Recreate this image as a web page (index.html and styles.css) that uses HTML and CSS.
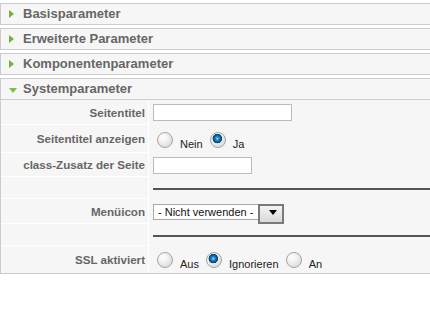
FILE: index.html
```html
<!DOCTYPE html>
<html lang="de">
<head>
  <meta charset="UTF-8" />
  <title>Parameter</title>
  <link rel="stylesheet" href="styles.css">
</head>
<body>

<div class="pane">
  <div class="panel">
    <h3 class="toggler closed"><span>Basisparameter</span></h3>
  </div>
  <div class="panel">
    <h3 class="toggler closed"><span>Erweiterte Parameter</span></h3>
  </div>
  <div class="panel">
    <h3 class="toggler closed"><span>Komponentenparameter</span></h3>
  </div>
  <div class="panel">
    <h3 class="toggler open"><span>Systemparameter</span></h3>
    <table class="paramlist">
      <tr class="r1">
        <td class="key">Seitentitel</td>
        <td class="value"><input type="text" class="text wide"></td>
      </tr>
      <tr class="r2">
        <td class="key">Seitentitel anzeigen</td>
        <td class="value radios">
          <input type="radio" name="show_title" id="st0"><label for="st0">Nein</label>
          <input type="radio" name="show_title" id="st1" checked><label for="st1">Ja</label>
        </td>
      </tr>
      <tr class="r3">
        <td class="key">class-Zusatz der Seite</td>
        <td class="value"><input type="text" class="text short"></td>
      </tr>
      <tr class="r4">
        <td class="key"></td>
        <td class="value"><hr></td>
      </tr>
      <tr class="r5">
        <td class="key">Menüicon</td>
        <td class="value">
          <span class="select">
            <select>
              <option>- Nicht verwenden -</option>
            </select>
          </span>
        </td>
      </tr>
      <tr class="r6">
        <td class="key"></td>
        <td class="value"><hr></td>
      </tr>
      <tr class="r7">
        <td class="key">SSL aktiviert</td>
        <td class="value radios">
          <input type="radio" name="secure" id="ss0"><label for="ss0">Aus</label>
          <input type="radio" name="secure" id="ss1" checked><label for="ss1">Ignorieren</label>
          <input type="radio" name="secure" id="ss2"><label for="ss2">An</label>
        </td>
      </tr>
    </table>
  </div>
</div>

</body>
</html>
```

FILE: styles.css
```css
* {
  margin: 0;
  padding: 0;
  box-sizing: border-box;
  font-family: "Liberation Sans", Arial, sans-serif;
}

html {
  overflow: hidden;
}

body {
  background: #fff;
  padding-top: 3px;
}

.pane {
  width: 640px;
}

.panel {
  border: 1px solid #ccc;
  background: #f6f6f6;
  margin-bottom: 3px;
}

.toggler {
  height: 20px;
  font-size: 13px;
  font-weight: bold;
  color: #666;
  line-height: 20px;
}

.toggler span {
  display: block;
  position: relative;
  padding-left: 22px;
}

.toggler span::before {
  content: "";
  position: absolute;
  left: 8px;
  top: 6px;
  width: 0;
  height: 0;
}

.closed span::before {
  border-top: 4px solid transparent;
  border-bottom: 4px solid transparent;
  border-left: 5px solid #6fb33a;
}

.open {
  height: 21px;
  border-bottom: 1px solid #ccc;
}

.open span::before {
  top: 9px;
  left: 8px;
  border-left: 4px solid transparent;
  border-right: 4px solid transparent;
  border-top: 5px solid #7cc04a;
}

table.paramlist {
  width: 100%;
  border-collapse: separate;
  border-spacing: 0;
  font-size: 11px;
}

.paramlist .key {
  width: 148px;
  text-align: right;
  padding-right: 3px;
  font-size: 11.6px;
  font-weight: bold;
  color: #666;
  border-bottom: 1px solid #fff;
  border-right: 1px solid #fff;
  vertical-align: middle;
}

.paramlist .value {
  padding-left: 4px;
  color: #222;
  vertical-align: middle;
}

.r1 { height: 25px; }
.r2 { height: 28px; }
.r3 { height: 24px; }
.r4 { height: 22px; }
.r5 { height: 25px; }
.r6 { height: 22px; }
.r7 { height: 27px; }

.r7 .key {
  border-bottom: none;
}

.text {
  display: block;
  height: 17px;
  border: 1px solid #bcbcbc;
  background: #fff;
}

.wide {
  width: 139px;
}

.short {
  width: 99px;
  height: 17px;
}

hr {
  border: none;
  border-top: 2px solid #555;
  margin-top: 1px;
}

.radios {
  padding-top: 3px;
}

.radios input {
  -webkit-appearance: none;
  appearance: none;
  width: 16px;
  height: 16px;
  margin: 0 7px 0 4px;
  border-radius: 50%;
  border: 1px solid #a4a4a4;
  background: radial-gradient(circle at 35% 30%, #fff 0, #f2f2f2 35%, #d2d2d2 100%);
  vertical-align: baseline;
}

.radios input:checked {
  background:
    radial-gradient(circle at 45% 40%, #bfe6ff 0, #2a8fd0 1.5px, #0a5a96 3.5px, #0b3f6a 4.5px, transparent 5px),
    radial-gradient(circle at 35% 30%, #fff 0, #f2f2f2 35%, #d2d2d2 100%);
}

.radios label {
  margin-right: 0;
}

.select {
  display: inline-block;
  position: relative;
  margin-top: 1px;
}

.select select {
  -webkit-appearance: none;
  appearance: none;
  display: block;
  width: 131px;
  height: 16px;
  border: 1px solid #a8a8a8;
  background: #fff;
  font-size: 11px;
  color: #111;
  padding-left: 4px;
}

.select::after {
  content: "";
  position: absolute;
  right: 0;
  top: 0;
  width: 22px;
  height: 16px;
  border: 2px solid #7a7a7a;
  background: linear-gradient(#f4f4f4, #d9d9d9);
  pointer-events: none;
}

.select::before {
  content: "";
  position: absolute;
  right: 7px;
  top: 6px;
  border-left: 4px solid transparent;
  border-right: 4px solid transparent;
  border-top: 5px solid #000;
  z-index: 1;
  pointer-events: none;
}
```
